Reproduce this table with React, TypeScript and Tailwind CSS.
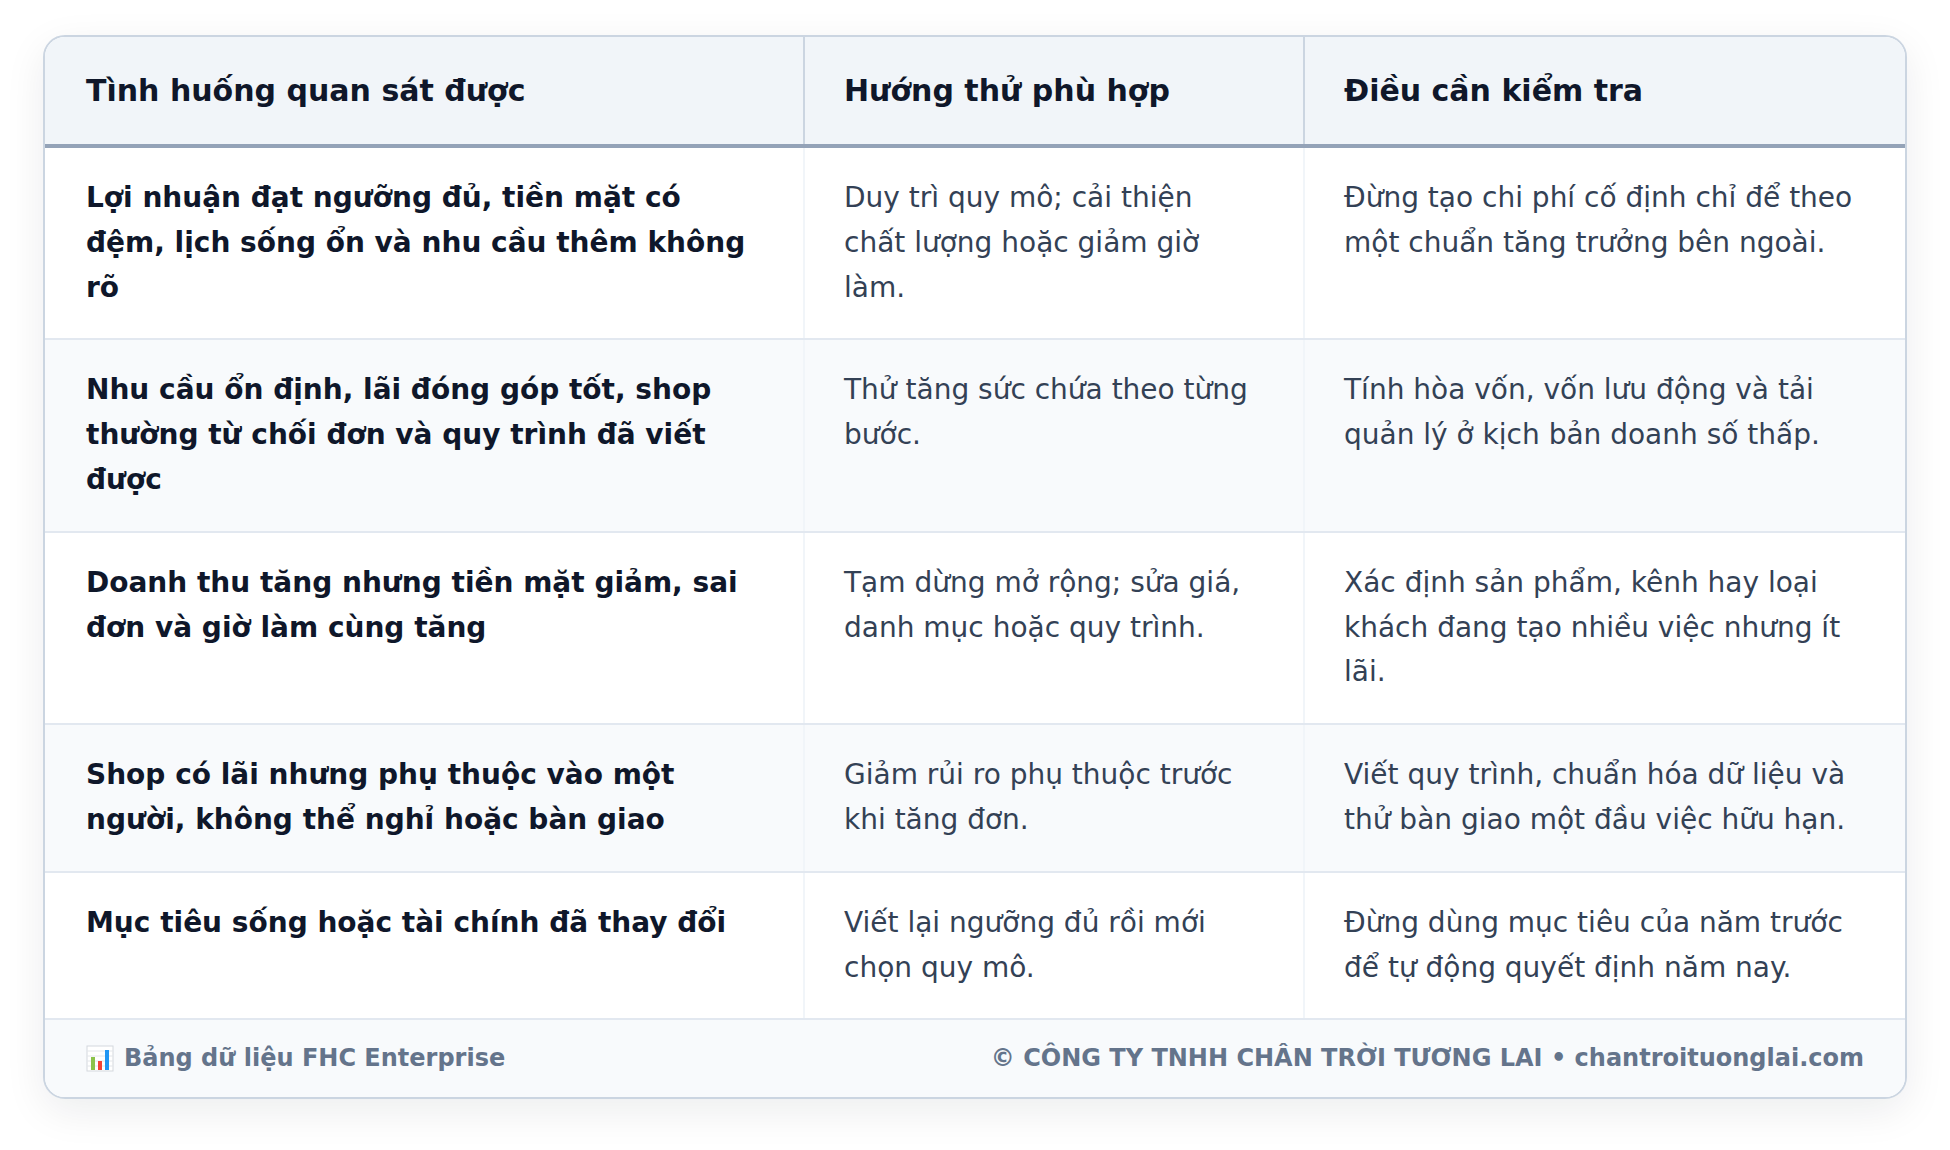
const rows = [
  {
    situation: "Lợi nhuận đạt ngưỡng đủ, tiền mặt có đệm, lịch sống ổn và nhu cầu thêm không rõ",
    direction: "Duy trì quy mô; cải thiện chất lượng hoặc giảm giờ làm.",
    check: "Đừng tạo chi phí cố định chỉ để theo một chuẩn tăng trưởng bên ngoài.",
  },
  {
    situation: "Nhu cầu ổn định, lãi đóng góp tốt, shop thường từ chối đơn và quy trình đã viết được",
    direction: "Thử tăng sức chứa theo từng bước.",
    check: "Tính hòa vốn, vốn lưu động và tải quản lý ở kịch bản doanh số thấp.",
  },
  {
    situation: "Doanh thu tăng nhưng tiền mặt giảm, sai đơn và giờ làm cùng tăng",
    direction: "Tạm dừng mở rộng; sửa giá, danh mục hoặc quy trình.",
    check: "Xác định sản phẩm, kênh hay loại khách đang tạo nhiều việc nhưng ít lãi.",
  },
  {
    situation: "Shop có lãi nhưng phụ thuộc vào một người, không thể nghỉ hoặc bàn giao",
    direction: "Giảm rủi ro phụ thuộc trước khi tăng đơn.",
    check: "Viết quy trình, chuẩn hóa dữ liệu và thử bàn giao một đầu việc hữu hạn.",
  },
  {
    situation: "Mục tiêu sống hoặc tài chính đã thay đổi",
    direction: "Viết lại ngưỡng đủ rồi mới chọn quy mô.",
    check: "Đừng dùng mục tiêu của năm trước để tự động quyết định năm nay.",
  },
];

function ChartIcon() {
  return (
    <svg width="28" height="27" viewBox="0 0 28 27" aria-hidden="true">
      <rect x="1" y="1" width="26" height="25" fill="#ffffff" stroke="#d4d8dd" strokeWidth="1" />
      <line x1="1" y1="6" x2="27" y2="6" stroke="#e3e6ea" strokeWidth="1" />
      <line x1="1" y1="11" x2="27" y2="11" stroke="#e3e6ea" strokeWidth="1" />
      <line x1="1" y1="16" x2="27" y2="16" stroke="#e3e6ea" strokeWidth="1" />
      <line x1="1" y1="21" x2="27" y2="21" stroke="#e3e6ea" strokeWidth="1" />
      <rect x="5" y="12" width="4" height="13" fill="#8bc34a" />
      <rect x="12" y="16" width="4" height="9" fill="#f44336" />
      <rect x="19" y="5" width="4" height="20" fill="#2196f3" />
    </svg>
  );
}

export default function App() {
  return (
    <div
      className="min-h-[1150px] w-[1950px] bg-white px-[43px] pt-[35px]"
      style={{ fontFamily: '"DejaVu Sans", Verdana, sans-serif' }}
    >
      <div className="overflow-hidden rounded-[22px] border-2 border-[#cbd5e1] bg-white shadow-[0_12px_40px_rgba(15,23,42,0.08)]">
        {/* header */}
        <div className="grid grid-cols-[758px_500px_1fr] border-b-4 border-[#94a3b8] bg-[#f1f5f9] text-[30px] font-bold leading-[47px] text-[#0f172a]">
          <div className="px-[41px] py-[30px]">Tình huống quan sát được</div>
          <div className="border-l-2 border-[#cbd5e1] pl-[39px] pr-[43px] py-[30px]">Hướng thử phù hợp</div>
          <div className="border-l-2 border-[#cbd5e1] pl-[39px] pr-[43px] py-[30px]">Điều cần kiểm tra</div>
        </div>

        {/* body */}
        {rows.map((row, i) => (
          <div
            key={i}
            className={`grid grid-cols-[758px_500px_1fr] text-[28px] leading-[1.6] ${
              i % 2 === 1 ? "bg-[#f8fafc]" : "bg-white"
            } ${i < rows.length - 1 ? "border-b-2 border-[#e2e8f0]" : ""}`}
          >
            <div className="px-[41px] py-7 font-bold text-[#0f172a]">{row.situation}</div>
            <div className="border-l-2 border-[#f1f5f9] pl-[39px] pr-[43px] py-7 text-[#334155]">{row.direction}</div>
            <div className="border-l-2 border-[#f1f5f9] pl-[39px] pr-[43px] py-7 text-[#334155]">{row.check}</div>
          </div>
        ))}

        {/* footer */}
        <div className="flex items-center justify-between border-t-2 border-[#e2e8f0] bg-[#f8fafc] px-[41px] py-[19px] text-[24px] font-bold leading-[1.6] text-[#64748b]">
          <div className="flex items-center gap-[10px]">
            <ChartIcon />
            <span>Bảng dữ liệu FHC Enterprise</span>
          </div>
          <span>© CÔNG TY TNHH CHÂN TRỜI TƯƠNG LAI • chantroituonglai.com</span>
        </div>
      </div>
    </div>
  );
}
